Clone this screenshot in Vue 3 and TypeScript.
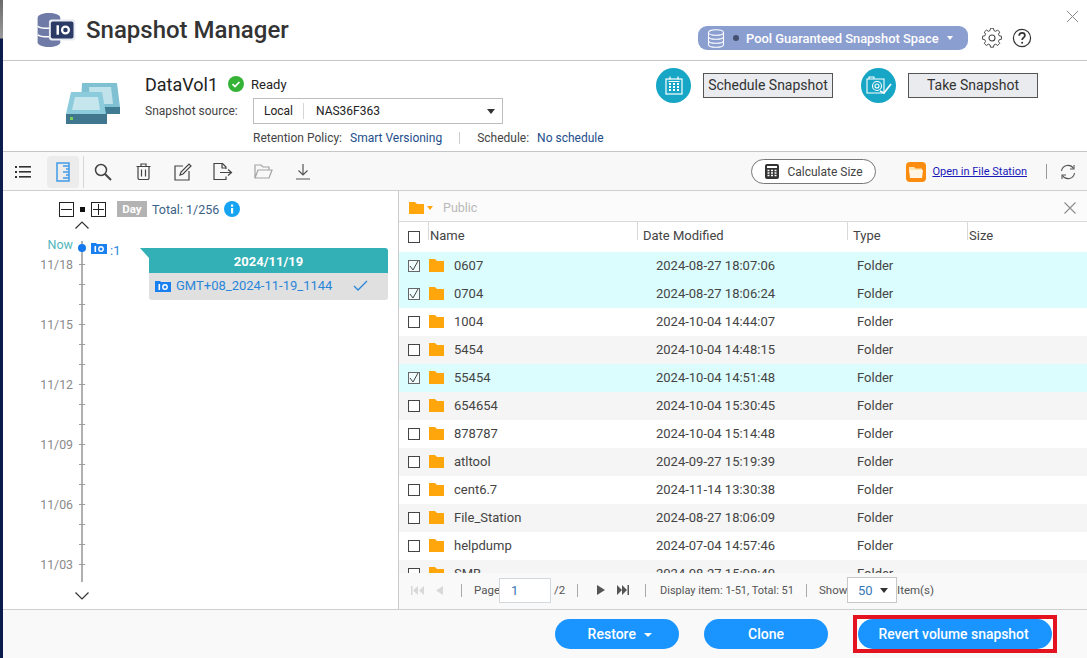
<script setup lang="ts">
interface FileRow {
  name: string
  date: string
  checked: boolean
}

const rows: FileRow[] = [
  { name: '0607', date: '2024-08-27 18:07:06', checked: true },
  { name: '0704', date: '2024-08-27 18:06:24', checked: true },
  { name: '1004', date: '2024-10-04 14:44:07', checked: false },
  { name: '5454', date: '2024-10-04 14:48:15', checked: false },
  { name: '55454', date: '2024-10-04 14:51:48', checked: true },
  { name: '654654', date: '2024-10-04 15:30:45', checked: false },
  { name: '878787', date: '2024-10-04 15:14:48', checked: false },
  { name: 'atltool', date: '2024-09-27 15:19:39', checked: false },
  { name: 'cent6.7', date: '2024-11-14 13:30:38', checked: false },
  { name: 'File_Station', date: '2024-08-27 18:06:09', checked: false },
  { name: 'helpdump', date: '2024-07-04 14:57:46', checked: false },
  { name: 'SMB', date: '2024-08-27 15:08:40', checked: false }
]

const dates = ['11/18', '11/15', '11/12', '11/09', '11/06', '11/03']
</script>

<template>
  <div class="page">
    <div class="strip"></div>
    <div class="window">
      <header class="head">
        <svg class="logo" width="41" height="34" viewBox="0 0 42 36">
          <path d="M1 5c0-3 6-5 12-5s12 2 12 5v26c0 3-6 5-12 5S1 34 1 31z" fill="#6f7aa6" />
          <path d="M1 14c3 3 20 3 24 0M1 23c3 3 20 3 24 0" stroke="#fff" stroke-width="1.6" fill="none" />
          <rect x="13" y="7" width="28" height="22" rx="3" fill="#e8ebf2" />
          <rect x="15" y="9" width="24" height="18" rx="2" fill="#2c3b66" />
          <rect x="21" y="13" width="2.6" height="10" fill="#fff" />
          <circle cx="30.5" cy="18" r="3.6" fill="none" stroke="#fff" stroke-width="2.4" />
        </svg>
        <h1 class="title">Snapshot Manager</h1>
        <div class="pill">
          <svg width="18" height="19" viewBox="0 0 18 19" fill="none" stroke="#fff" stroke-width="1.1">
            <ellipse cx="9" cy="3.5" rx="7.5" ry="2.8" />
            <path d="M1.5 3.5v12c0 1.6 3.4 2.8 7.500 2.800s7.500-1.200 7.500-2.800v-12M1.500 7.500c0 1.600 3.400 2.800 7.500 2.800s7.500-1.200 7.500-2.800M1.500 11.500c0 1.600 3.400 2.800 7.500 2.800s7.500-1.200 7.500-2.800" />
          </svg>
          <span class="pill-dot"></span>
          <span class="pill-text">Pool Guaranteed Snapshot Space</span>
          <span class="pill-caret"></span>
        </div>
        <svg class="gear" width="20" height="20" viewBox="0 0 24 24" fill="none" stroke="#444" stroke-width="1.3">
          <circle cx="12" cy="12" r="3.6" />
          <path d="M10 1.500h4l.6 3 2.300 1 2.600-1.700 2.800 2.800-1.700 2.600 1 2.300 3 .6v4l-3 .6-1 2.300 1.700 2.600-2.800 2.800-2.600-1.700-2.300 1-.6 3h-4l-.6-3-2.300-1-2.600 1.700-2.800-2.800 1.700-2.600-1-2.300-3-.6v-4l3-.6 1-2.300-1.700-2.600 2.800-2.800 2.600 1.700 2.300-1z" transform="translate(1.200 -1) scale(.9)" />
        </svg>
        <svg class="help" width="20" height="20" viewBox="0 0 20 20" fill="none" stroke="#333" stroke-width="1.2">
          <circle cx="10" cy="10" r="8.6" />
          <path d="M7.200 7.800c0-1.800 1.300-2.900 2.900-2.900s2.800 1 2.800 2.500c0 2.200-2.800 2.300-2.800 4.600" stroke-width="1.700" />
          <circle cx="10.100" cy="14.700" r="1" fill="#333" stroke="none" />
        </svg>
        <svg class="close" width="11" height="11" viewBox="0 0 11 11" stroke="#8a8a8a" stroke-width="1">
          <path d="M0 0l11 11M11 0L0 11" />
        </svg>
      </header>

      <section class="info">
        <svg class="vol" width="54" height="41" viewBox="0 0 54 41">
          <path d="M16 0h35l3 24v7H20L15 20z" fill="#7fc1d2" />
          <path d="M23 4h22l2 17H24z" fill="#bfe2eb" />
          <path d="M28 24h26v7H28z" fill="#3f7c93" />
          <path d="M5 9h31l4 22H0z" fill="#8bcbdc" />
          <path d="M9 14h23l2 13H6z" fill="#c6e6ee" />
          <rect x="0" y="31" width="41" height="10" fill="#40778f" />
          <rect x="4" y="34" width="3" height="3" fill="#7bd05a" />
        </svg>
        <div class="source">
          <div class="vol-line">
            <span class="vol-name">DataVol1</span>
            <svg width="16" height="16" viewBox="0 0 16 16">
              <circle cx="8" cy="8" r="8" fill="#35b336" />
              <path d="M4.500 8.200l2.500 2.400 4.400-4.600" stroke="#fff" stroke-width="1.800" fill="none" />
            </svg>
            <span class="ready">Ready</span>
          </div>
          <div class="src-line">
            <span class="src-label">Snapshot source:</span>
            <div class="src-select">
              <span class="src-local">Local</span>
              <span class="src-nas">NAS36F363</span>
              <span class="caret-dark"></span>
            </div>
          </div>
          <div class="policy">
            <span>Retention Policy:</span>
            <a class="link-blue">Smart Versioning</a>
            <i class="policy-sep"></i>
            <span>Schedule:</span>
            <a class="link-blue">No schedule</a>
          </div>
        </div>
        <div class="actions">
          <span class="round">
            <svg width="18" height="19" viewBox="0 0 18 19" fill="none" stroke="#fff" stroke-width="1.200">
              <rect x="1" y="3" width="16" height="15" />
              <path d="M5 0.500v3M13 0.500v3M3.500 5.500h11" />
              <path d="M4 8h2M8 8h2M12 8h2M4 11h2M8 11h2M12 11h2M4 14h2M8 14h2M12 14h2" stroke-width="2" />
            </svg>
          </span>
          <button class="flat sched">Schedule Snapshot</button>
          <span class="round">
            <svg width="26" height="19" viewBox="0 0 26 19" fill="none" stroke="#fff" stroke-width="1.100">
              <path d="M1 3h17v14H1zM3 3V1h5v2" />
              <circle cx="11" cy="10" r="4.500" />
              <circle cx="11" cy="10" r="2" />
              <path d="M14 15l4 2 7-9" stroke-width="1.600" />
            </svg>
          </span>
          <button class="flat take-btn">Take Snapshot</button>
        </div>
      </section>

      <nav class="toolbar">
        <span class="tool list">
          <svg width="16" height="13" viewBox="0 0 16 13" fill="#333">
            <rect x="0" y="1" width="2" height="2" /><rect x="4" y="1" width="12" height="1.600" />
            <rect x="0" y="6" width="2" height="2" /><rect x="4" y="6" width="12" height="1.600" />
            <rect x="0" y="11" width="2" height="2" /><rect x="4" y="11" width="12" height="1.600" />
          </svg>
        </span>
        <span class="tool active">
          <svg width="14" height="20" viewBox="0 0 14 20" fill="none" stroke="#3f9ae8" stroke-width="1.500">
            <rect x="1" y="1" width="12" height="18" />
            <path d="M7 4h6M10 7h3M7 10h6M10 13h3M7 16h6" />
          </svg>
        </span>
        <i class="tool-sep"></i>
        <span class="tool">
          <svg width="18" height="18" viewBox="0 0 18 18" fill="none" stroke="#444" stroke-width="1.500">
            <circle cx="7" cy="7" r="5.500" /><path d="M11 11l6 6" stroke-width="2" />
          </svg>
        </span>
        <span class="tool">
          <svg width="15" height="17" viewBox="0 0 15 17" fill="none" stroke="#444" stroke-width="1.200">
            <path d="M2 4v11a1.500 1.500 0 0 0 1.500 1.500h8A1.500 1.500 0 0 0 13 15V4M0.500 3.500h14M5 3.500V1h5v2.500M5.500 6.500v7M9.500 6.500v7" />
          </svg>
        </span>
        <span class="tool">
          <svg width="18" height="18" viewBox="0 0 18 18" fill="none" stroke="#444" stroke-width="1.200">
            <path d="M9 3H1v14h14V8" />
            <path d="M6 12l1-3 8-8 2 2-8 8z" />
          </svg>
        </span>
        <span class="tool">
          <svg width="20" height="17" viewBox="0 0 20 17" fill="none" stroke="#444" stroke-width="1.200">
            <path d="M13 6V4l-3.500-3.500H1v16h12v-3" />
            <path d="M9 1v4h4M7 9.500h11M15 6.500l3.500 3-3.500 3" />
          </svg>
        </span>
        <span class="tool">
          <svg width="19" height="15" viewBox="0 0 19 15" fill="none" stroke="#a3a3a3" stroke-width="1.200">
            <path d="M1 14V1h6l2 2h6v3M1 14l3-8h14l-3 8z" />
          </svg>
        </span>
        <span class="tool">
          <svg width="14" height="16" viewBox="0 0 14 16" fill="none" stroke="#555" stroke-width="1.200">
            <path d="M7 0v11M2.500 6.500L7 11l4.500-4.500M0 15h14" />
          </svg>
        </span>
        <span class="tool-gap"></span>
        <button class="calc">
          <svg width="14" height="15" viewBox="0 0 14 15">
            <rect width="14" height="15" rx="2" fill="#333" />
            <rect x="2" y="2" width="10" height="2" fill="#fff" />
            <path d="M2.500 6.500h2M6 6.500h2M9.500 6.500h2M2.500 9h2M6 9h2M9.500 9h2M2.500 11.500h2M6 11.500h2M9.500 11.500h2" stroke="#fff" stroke-width="1.500" />
          </svg>
          Calculate Size
        </button>
        <span class="fs-icon">
          <svg width="14" height="12" viewBox="0 0 14 12">
            <path d="M0 1h5l1.500 1.500H13V5H0z" fill="#ffe3b0" />
            <path d="M0 4h14l-1 8H1z" fill="#fff5e2" />
          </svg>
        </span>
        <a class="fs-link">Open in File Station</a>
        <i class="fs-sep"></i>
        <svg class="refresh" width="16" height="16" viewBox="0 0 16 16" fill="none" stroke="#555" stroke-width="1.100">
          <path d="M1.500 7a6.500 6.500 0 0 1 12-2.500M14.500 9a6.500 6.500 0 0 1-12 2.500" />
          <path d="M14 1v4h-4M2 15v-4h4" />
        </svg>
      </nav>

      <main class="main">
        <aside class="left">
          <div class="zoom-line">
            <span class="box">
              <svg width="11" height="11" viewBox="0 0 11 11" stroke="#222"><path d="M0 5.500h11" /></svg>
            </span>
            <span class="zoom-dot"></span>
            <span class="box">
              <svg width="11" height="11" viewBox="0 0 11 11" stroke="#222"><path d="M0 5.500h11M5.500 0v11" /></svg>
            </span>
            <span class="day">Day</span>
            <span class="total">Total: 1/256</span>
            <svg width="16" height="16" viewBox="0 0 16 16">
              <circle cx="8" cy="8" r="8" fill="#16a3f2" />
              <rect x="7" y="7" width="2.200" height="5.500" fill="#fff" />
              <rect x="7" y="3.500" width="2.200" height="2.200" fill="#fff" />
            </svg>
          </div>
          <svg class="chev" width="14" height="8" viewBox="0 0 14 8" fill="none" stroke="#333" stroke-width="1.200">
            <path d="M0.500 7.500L7 1l6.500 6.500" />
          </svg>
          <div class="timeline">
            <div class="labels">
              <span class="now">Now</span>
              <span v-for="d in dates" :key="d" class="date">{{ d }}</span>
            </div>
            <div class="axis">
              <span class="axis-dot"></span>
            </div>
            <div class="events">
              <div class="count">
                <svg width="16" height="12" viewBox="0 0 16 12">
                  <path d="M0 1h5l1 1h10v10H0z" fill="#1a80f0" />
                  <rect x="3.500" y="4" width="1.600" height="6" fill="#fff" />
                  <circle cx="10" cy="7" r="2.200" fill="none" stroke="#fff" stroke-width="1.400" />
                </svg>
                <span>:1</span>
              </div>
              <div class="card">
                <div class="card-head">2024/11/19</div>
                <div class="card-body">
                  <svg width="16" height="12" viewBox="0 0 16 12">
                    <path d="M0 1h5l1 1h10v10H0z" fill="#1a80f0" />
                    <rect x="3.500" y="4" width="1.600" height="6" fill="#fff" />
                    <circle cx="10" cy="7" r="2.200" fill="none" stroke="#fff" stroke-width="1.400" />
                  </svg>
                  <span class="card-name">GMT+08_2024-11-19_1144</span>
                  <svg class="card-check" width="15" height="11" viewBox="0 0 15 11" fill="none" stroke="#2a84d8" stroke-width="1.300">
                    <path d="M1 6l4 4 9-9" />
                  </svg>
                </div>
              </div>
            </div>
          </div>
          <svg class="chev down" width="14" height="8" viewBox="0 0 14 8" fill="none" stroke="#333" stroke-width="1.200">
            <path d="M0.500 0.500L7 7l6.500-6.500" />
          </svg>
        </aside>

        <section class="right">
          <div class="crumb">
            <svg width="15" height="12" viewBox="0 0 15 12"><path d="M0 0h6l2 2h7v10H0z" fill="#ffa60d" /></svg>
            <span class="crumb-caret"></span>
            <span class="crumb-text">Public</span>
            <svg class="crumb-x" width="12" height="12" viewBox="0 0 12 12" stroke="#8c8c8c" stroke-width="1.100">
              <path d="M0.500 0.500l11 11M11.500 0.500l-11 11" />
            </svg>
          </div>
          <div class="grid thead">
            <span class="cell-check"><i class="chk"></i></span>
            <span class="th th-tight">Name</span>
            <span class="th">Date Modified</span>
            <span class="th">Type</span>
            <span class="th th-tight">Size</span>
          </div>
          <div class="tbody">
            <div
              v-for="(r, i) in rows"
              :key="r.name"
              class="grid row"
              :class="{ on: r.checked, odd: i % 2 === 1 }"
            >
              <span class="cell-check">
                <i class="chk" :class="{ ticked: r.checked }">
                  <svg v-if="r.checked" width="10" height="10" viewBox="0 0 10 10" fill="none" stroke="#444" stroke-width="1">
                    <path d="M1 5l3 4 5-9" />
                  </svg>
                </i>
              </span>
              <span class="name">
                <svg width="15" height="13" viewBox="0 0 15 13"><path d="M0 0h6l2 2h7v11H0z" fill="#ffa60d" /></svg>
                {{ r.name }}
              </span>
              <span class="td-date">{{ r.date }}</span>
              <span class="td-type">Folder</span>
              <span></span>
            </div>
          </div>
          <div class="pager">
            <span class="pg-btns first">
              <svg width="13" height="9" viewBox="0 0 13 9" fill="#d8d8d8"><rect width="1.500" height="9" /><path d="M7 0v9L2 4.500zM13 0v9L8 4.500z" /></svg>
              <svg class="prev" width="7" height="9" viewBox="0 0 7 9" fill="#d8d8d8"><path d="M7 0v9L0 4.500z" /></svg>
            </span>
            <i class="pg-sep"></i>
            <span class="pg-page">Page</span>
            <span class="pg-input">1</span>
            <span class="pg-of">/2</span>
            <i class="pg-sep"></i>
            <span class="pg-btns next">
              <svg width="8" height="10" viewBox="0 0 8 10" fill="#555"><path d="M0 0v10l8-5z" /></svg>
              <svg class="last" width="12" height="10" viewBox="0 0 12 10" fill="#555"><path d="M0 0v10l5-5zM5 0v10l5-5z" /><rect x="10.500" width="1.500" height="10" /></svg>
            </span>
            <i class="pg-sep"></i>
            <span class="pg-info">Display item: 1-51, Total: 51</span>
            <i class="pg-sep"></i>
            <span class="pg-show">Show</span>
            <span class="pg-select">50<span class="caret-dark small"></span></span>
            <span class="pg-items">Item(s)</span>
          </div>
        </section>
      </main>

      <footer class="foot">
        <button class="primary restore">Restore <span class="white-caret"></span></button>
        <button class="primary clone">Clone</button>
        <div class="mark">
          <button class="primary revert">Revert volume snapshot</button>
        </div>
      </footer>
    </div>
  </div>
</template>

<style>
html,
body {
  margin: 0;
  background: #fff;
}
</style>

<style scoped>
.page {
  display: flex;
  width: 1087px;
  height: 658px;
  overflow: hidden;
  font-family: Roboto, "Liberation Sans", sans-serif;
  color: #333;
}

.strip {
  width: 3px;
  flex: none;
  background: linear-gradient(#6b6b6b 0, #9a9a9a 38px, #0b1b4b 39px);
}

.window {
  flex: 1;
  min-width: 0;
  display: flex;
  flex-direction: column;
  background: #fff;
}

.head {
  position: relative;
  height: 60px;
  flex: none;
  display: flex;
  align-items: center;
  padding-left: 33px;
  border-bottom: 1px solid #c6c6c6;
}

.title {
  margin: 0 0 0 9px;
  font-size: 24px;
  font-weight: 500;
  color: #333;
  flex: 1;
}

.pill {
  display: flex;
  align-items: center;
  width: 270px;
  height: 24px;
  box-sizing: border-box;
  padding-left: 9px;
  margin-top: 16px;
  border-radius: 9px;
  background: #8b9ed0;
  color: #fff;
  font-size: 12.900px;
  font-weight: 500;
}

.pill-dot {
  width: 6px;
  height: 6px;
  margin-left: 8px;
  border-radius: 50%;
  background: #44506e;
}

.pill-text {
  margin-left: 7px;
  white-space: nowrap;
}

.pill-caret {
  margin-left: 8px;
  border: 3.500px solid transparent;
  border-top: 4px solid #fff;
  border-bottom: 0;
}

.gear {
  margin: 16px 0 0 14px;
}

.help {
  margin: 16px 55px 0 10px;
}

.close {
  position: absolute;
  top: 11px;
  right: 9px;
}

.info {
  height: 91px;
  flex: none;
  display: flex;
  box-sizing: border-box;
  border-bottom: 1px solid #c6c6c6;
}

.vol {
  margin: 22px 0 0 63px;
  flex: none;
}

.source {
  margin-left: 25px;
  width: 511px;
  flex: none;
}

.vol-line {
  display: flex;
  align-items: center;
  height: 20px;
  margin-top: 13px;
}

.vol-name {
  font-size: 18px;
  color: #222;
  margin-right: 10px;
}

.ready {
  font-size: 13px;
  margin-left: 7px;
  color: #222;
}

.src-line {
  display: flex;
  align-items: center;
  margin-top: 4px;
}

.src-label {
  width: 108px;
  font-size: 12px;
  color: #444;
}

.src-select {
  display: flex;
  align-items: center;
  width: 250px;
  height: 26px;
  box-sizing: border-box;
  border: 1px solid #bdbdbd;
  font-size: 12px;
  color: #222;
}

.src-local {
  width: 50px;
  padding-left: 10px;
  box-sizing: border-box;
  border-right: 1px solid #d5d5d5;
  line-height: 16px;
}

.src-nas {
  margin-left: 12px;
  flex: 1;
}

.caret-dark {
  border: 4.500px solid transparent;
  border-top: 5px solid #333;
  border-bottom: 0;
  margin-right: 7px;
}

.policy {
  display: flex;
  align-items: center;
  margin: 7px 0 0 108px;
  font-size: 12px;
  color: #444;
  white-space: nowrap;
}

.link-blue {
  color: #234e8c;
  margin-left: 8px;
}

.policy-sep {
  width: 1px;
  height: 12px;
  background: #ccc;
  margin: 0 17px;
}

.actions {
  display: flex;
  align-items: center;
  height: 48px;
}

.round {
  width: 35px;
  height: 35px;
  border-radius: 50%;
  background: #17a6c6;
  display: flex;
  align-items: center;
  justify-content: center;
  flex: none;
}

.flat {
  height: 25px;
  box-sizing: border-box;
  border: 1px solid #555;
  background: #e9ebef;
  color: #333;
  font: 400 14px Roboto, sans-serif;
  padding: 0;
  white-space: nowrap;
}

.sched {
  width: 130px;
  margin: 0 28px 0 12px;
}

.take-btn {
  width: 130px;
  margin-left: 12px;
}

.toolbar {
  height: 37px;
  flex: none;
  display: flex;
  align-items: center;
  padding-top: 1px;
  background: #f8f8f8;
  border-bottom: 1px solid #cfcfcf;
}

.tool {
  width: 40px;
  height: 32px;
  display: flex;
  align-items: center;
  justify-content: center;
  flex: none;
}

.list {
  width: 32px;
  margin: 0 8px 0 4px;
}

.tool.active {
  width: 32px;
  border-radius: 4px;
  background: #ececec;
}

.tool-sep {
  width: 1px;
  height: 32px;
  margin: 0 -1px 0 4px;
  background: #d6d6d6;
}

.tool-gap {
  flex: 1;
}

.calc {
  display: flex;
  align-items: center;
  gap: 8px;
  width: 125px;
  height: 25px;
  box-sizing: border-box;
  padding: 0 0 0 13px;
  border: 1px solid #777;
  border-radius: 13px;
  background: #fff;
  color: #444;
  font: 400 12px Roboto, sans-serif;
}

.fs-icon {
  width: 20px;
  height: 20px;
  margin-left: 30px;
  border-radius: 4px;
  background: #fb8c0f;
  display: flex;
  align-items: center;
  justify-content: center;
}

.fs-link {
  margin-left: 6px;
  font-size: 11px;
  color: #1a1ab8;
  text-decoration: underline;
  white-space: nowrap;
}

.fs-sep {
  width: 1px;
  height: 15px;
  margin-left: 19px;
  background: #999;
}

.refresh {
  margin: 0 11px 0 13px;
}

.main {
  flex: 1;
  min-height: 0;
  display: flex;
}

.left {
  width: 395px;
  flex: none;
  border-right: 1px solid #ccc;
}

.zoom-line {
  display: flex;
  align-items: center;
  height: 16px;
  margin: 10px 0 0 56px;
}

.box {
  width: 15px;
  height: 15px;
  box-sizing: border-box;
  border: 1px solid #222;
  display: flex;
  align-items: center;
  justify-content: center;
}

.zoom-dot {
  width: 5px;
  height: 5px;
  background: #111;
  margin: 0 6px;
}

.day {
  margin: 0 5px 0 11px;
  width: 30px;
  height: 16px;
  background: #b3b3b3;
  color: #fff;
  font-size: 11.500px;
  font-weight: 700;
  text-align: center;
  line-height: 16px;
}

.total {
  font-size: 12.500px;
  color: #3b6285;
  margin-right: 5px;
}

.chev {
  display: block;
  margin: 4px 0 0 72px;
}

.timeline {
  display: flex;
  height: 341px;
  margin-top: 12px;
}

.labels {
  width: 70px;
  margin-left: 8px;
  padding-top: 3px;
  display: flex;
  flex-direction: column;
  align-items: flex-end;
  flex: none;
}

.now {
  flex: none;
  height: 20px;
  line-height: 16px;
  font-size: 12.500px;
  color: #52b6bb;
  margin: -7px 8px 0 0;
}

.date {
  height: 60px;
  line-height: 16px;
  font-size: 12.300px;
  color: #8a8a8a;
  margin-right: 8px;
  flex: none;
}

.date:last-child {
  height: 16px;
}

.axis {
  position: relative;
  width: 2px;
  background: #b0b0b0;
  flex: none;
}

.axis::before {
  content: "";
  position: absolute;
  left: -2px;
  right: -2px;
  top: 23px;
  bottom: 0;
  background: repeating-linear-gradient(#9a9a9a 0, #9a9a9a 1px, transparent 1px, transparent 20px);
}

.axis-dot {
  position: absolute;
  top: 3px;
  left: -3px;
  width: 8px;
  height: 8px;
  border-radius: 50%;
  background: #1478ee;
}

.events {
  margin-left: 8px;
  flex: 1;
}

.count {
  display: flex;
  align-items: flex-start;
  gap: 3px;
  font-size: 13px;
  color: #2a86d8;
  height: 9px;
  margin-top: 1px;
}

.count span {
  line-height: 18px;
}

.card {
  position: relative;
  width: 239px;
  margin: -3px 0 0 58px;
}

.card::before {
  content: "";
  position: absolute;
  left: -9px;
  top: 0;
  border-top: 10px solid #33b0b5;
  border-left: 9px solid transparent;
}

.card-head {
  height: 25px;
  background: #33b0b5;
  color: #fff;
  font-size: 13px;
  font-weight: 700;
  text-align: center;
  line-height: 27px;
  border-radius: 0 3px 0 0;
}

.card-body {
  display: flex;
  align-items: center;
  height: 27px;
  box-sizing: border-box;
  padding: 0 0 2px 6px;
  background: #e0e0e0;
  border-radius: 0 0 3px 3px;
}

.card-name {
  margin-left: 5px;
  font-size: 13px;
  color: #2a86d8;
  flex: 1;
}

.card-check {
  margin-right: 20px;
}

.chev.down {
  margin-top: 10px;
}

.right {
  flex: 1;
  min-width: 0;
  display: flex;
  flex-direction: column;
}

.crumb {
  display: flex;
  align-items: center;
  height: 31px;
  flex: none;
  padding: 3px 0 0 10px;
  background: #fbfbfb;
  border-bottom: 1px solid #d9d9d9;
  box-sizing: border-box;
}

.crumb-caret {
  margin-left: 3px;
  border: 3px solid transparent;
  border-top: 4px solid #ffa60d;
  border-bottom: 0;
}

.crumb-text {
  margin-left: 10px;
  font-size: 12.500px;
  color: #b9b9b9;
  flex: 1;
}

.crumb-x {
  margin-right: 11px;
}

.grid {
  display: grid;
  grid-template-columns: 29px 209px 210px 120px 1fr;
  align-items: center;
}

.thead {
  height: 30px;
  flex: none;
  background: #fff;
}

.th {
  align-self: start;
  height: 18px;
  line-height: 28px;
  font-size: 13px;
  color: #444;
  padding-left: 5px;
  border-left: 1px solid #d9d9d9;
}

.th-tight {
  padding-left: 1px;
}

.cell-check {
  display: flex;
  padding-left: 9px;
}

.chk {
  width: 12px;
  height: 12px;
  box-sizing: border-box;
  border: 1px solid #444;
  background: #fff;
  display: flex;
  align-items: center;
  justify-content: center;
}

.chk.ticked {
  background: #f0fdfd;
  border-color: #666;
}

.tbody {
  flex: 1;
  min-height: 0;
  overflow: hidden;
}

.row {
  height: 28px;
  box-sizing: border-box;
  padding-bottom: 1px;
  font-size: 13px;
  color: #444;
}

.row.odd {
  background: #f5f5f5;
}

.row.on {
  background: #dcfdfd;
}

.name {
  display: flex;
  align-items: center;
  gap: 10px;
  padding-left: 1px;
}

.td-date {
  padding-left: 19px;
}

.td-type {
  padding-left: 10px;
}

.pager {
  height: 36px;
  flex: none;
  box-sizing: border-box;
  padding-bottom: 2px;
  display: flex;
  align-items: center;
  background: #f9f9f9;
  font-size: 11.500px;
  color: #555;
  white-space: nowrap;
}

.pg-btns {
  display: flex;
  align-items: center;
}

.first {
  margin-left: 12px;
  width: 50px;
}

.prev {
  margin-left: 12px;
}

.pg-sep {
  width: 1px;
  height: 13px;
  background: #aaa;
  flex: none;
}

.pg-page {
  margin-left: 12px;
  width: 25px;
}

.pg-input {
  width: 52px;
  height: 25px;
  box-sizing: border-box;
  border: 1px solid #d4d9de;
  background: #fff;
  padding-left: 11px;
  line-height: 23px;
  font-size: 13px;
  color: #3678b8;
}

.pg-of {
  margin-left: 3px;
  width: 23px;
}

.next {
  margin-left: 19px;
  width: 48px;
}

.last {
  margin-left: 12px;
}

.pg-info {
  margin-left: 14px;
  width: 146px;
  font-size: 11px;
}

.pg-show {
  margin-left: 12px;
  width: 28px;
}

.pg-select {
  display: flex;
  align-items: center;
  justify-content: space-between;
  width: 50px;
  height: 26px;
  box-sizing: border-box;
  border: 1px solid #c8c8c8;
  background: #fff;
  padding-left: 10px;
  font-size: 13px;
  color: #3678b8;
}

.caret-dark.small {
  margin-right: 8px;
  border-width: 4px;
  border-top-width: 5px;
  border-bottom-width: 0;
}

.foot {
  height: 48px;
  flex: none;
  display: flex;
  align-items: center;
  background: #f9f9f9;
  border-top: 1px solid #cfcfcf;
}

.primary {
  height: 30px;
  border: 0;
  border-radius: 15px;
  background: #1a94ff;
  color: #fff;
  font: 500 14px Roboto, sans-serif;
  padding: 0;
}

.restore {
  width: 124px;
  margin-left: 552px;
  padding-left: 6px;
}

.white-caret {
  display: inline-block;
  margin-left: 5px;
  vertical-align: 2px;
  border: 4px solid transparent;
  border-top: 4px solid #fff;
  border-bottom: 0;
}

.clone {
  width: 124px;
  margin-left: 25px;
}

.mark {
  display: flex;
  margin-left: 25px;
  padding: 0 1px;
  border: 4px solid #e3141f;
  background: #fff;
}

.revert {
  width: 194px;
  padding-right: 3px;
  font-size: 13.900px;
}
</style>
